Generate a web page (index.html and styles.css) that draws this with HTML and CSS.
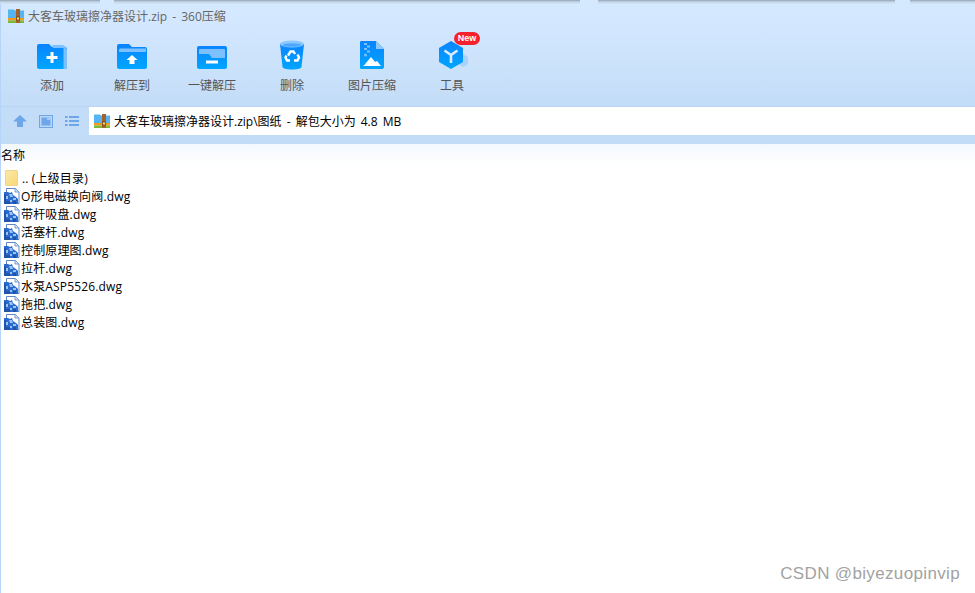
FILE: index.html
```html
<!DOCTYPE html>
<html lang="zh-CN">
<head>
    <meta charset="UTF-8">
    <title>大客车玻璃擦净器设计.zip - 360压缩</title>
    <link rel="stylesheet" href="styles.css">
</head>
<body>

<svg class="defs" width="0" height="0">
    <linearGradient id="blueFade" x1="0" y1="0" x2="0" y2="1">
        <stop offset="0" stop-color="#0a84ff"/>
        <stop offset="1" stop-color="#00a6ff"/>
    </linearGradient>
    <symbol id="zip" viewBox="0 0 16 16">
        <path d="M0 1.500h6l1 1h9v8H0z" fill="#55b5f2"/>
        <rect x="0" y="10" width="16" height="2.500" fill="#f29a1f"/>
        <rect x="0" y="12.500" width="16" height="2.500" fill="#7cb83a"/>
        <rect x="8" y="1" width="4" height="14" fill="#a5622a"/>
        <rect x="8.500" y="9" width="3" height="3" fill="#f6d26a" stroke="#6b3d12" stroke-width=".7"/>
    </symbol>
    <symbol id="dwg" viewBox="0 0 16 16">
        <path d="M2.500 .5h9l3.500 3.500v11.500H2.500z" fill="#fff" stroke="#5f86c6"/>
        <path d="M11 .5v3.500h4" fill="#d7e6f8" stroke="#5f86c6" stroke-width=".8"/>
        <path d="M0 4h4l2 1 2-1 1 3 3 2 2 2v5H0z" fill="#2a6bd0"/>
        <path d="M5 6h3l1 3H6zM9 10h3v2H9zM2 8h2v3H2zM6 12h2v2H6z" fill="#9cc2ef"/>
        <path d="M0 6h2v10H0zM2 13h4v3H2zM9 13h3v3H9z" fill="#2353a8"/>
    </symbol>
</svg>

<div class="window">
    <div class="shadow-strip">
        <span class="seg-a"></span>
        <span class="seg-b"></span>
        <span class="seg-c"></span>
        <span class="seg-d"></span>
    </div>

    <header class="titlebar">
        <svg class="zip-icon" width="16" height="16"><use href="#zip"/></svg>
        <span>大客车玻璃擦净器设计.zip - 360压缩</span>
    </header>

    <nav class="toolbar">
        <div class="tool">
            <svg width="32" height="30" viewBox="0 0 32 30">
                <path d="M3 4h10l3 3h13a2 2 0 0 1 2 2v18a2 2 0 0 1-2 2H3a2 2 0 0 1-2-2V6a2 2 0 0 1 2-2z" fill="url(#blueFade)"/>
                <path d="M16 5h11l3 2v2a2 2 0 0 0-2-1H17z" fill="#7cc0ff"/>
                <path d="M27.500 8h1.500a2 2 0 0 1 2 2v17a2 2 0 0 1-2 2h-1.500z" fill="#7cc0ff"/>
                <path d="M11.500 16h4v-4h3v4h4v3h-4v4h-3v-4h-4z" fill="#fff" transform="translate(-1 0)"/>
            </svg>
            <span>添加</span>
        </div>
        <div class="tool">
            <svg width="32" height="30" viewBox="0 0 32 30">
                <path d="M3 4h10l3 3h13a2 2 0 0 1 2 2v18a2 2 0 0 1-2 2H3a2 2 0 0 1-2-2V6a2 2 0 0 1 2-2z" fill="url(#blueFade)"/>
                <path d="M3 10a1.500 1.500 0 0 1 1.500-1.500H30V12H3z" fill="#7cc0ff"/>
                <path d="M16 15l5.500 5H18.500v4h-5v-4H10.500z" fill="#fff"/>
            </svg>
            <span>解压到</span>
        </div>
        <div class="tool">
            <svg width="32" height="30" viewBox="0 0 32 30">
                <rect x="1" y="6" width="30" height="23" rx="2" fill="url(#blueFade)"/>
                <path d="M4 9h24a1 1 0 0 1 1 1v8H16l-3-4H3v-4a1 1 0 0 1 1-1z" fill="#7cc0ff"/>
                <rect x="10" y="20.500" width="12" height="3" fill="#fff"/>
            </svg>
            <span>一键解压</span>
        </div>
        <div class="tool">
            <svg width="26" height="30" viewBox="0 0 26 30">
                <path d="M1 4l2.500 23c.2 1.500 4 2.500 9.500 2.500s9.300-1 9.500-2.500L25 4z" fill="url(#blueFade)"/>
                <ellipse cx="13" cy="4" rx="12" ry="3.500" fill="#8ac8ff"/>
                <ellipse cx="13" cy="5" rx="9" ry="1.800" fill="#4aa8ff"/>
                <g fill="none" stroke="#fff" stroke-width="2.400">
                    <path d="M9 15.500l2.500-4h3l1.500 2.500"/>
                    <path d="M18.500 14.500l1.500 3-1.500 3H15"/>
                    <path d="M11 20.500H8l-1.500-3 1-2"/>
                </g>
            </svg>
            <span>删除</span>
        </div>
        <div class="tool">
            <svg width="26" height="30" viewBox="0 0 26 30">
                <path d="M2 1h15l8 8v18a2 2 0 0 1-2 2H2a1.500 1.500 0 0 1-1-2V2.500A1.500 1.500 0 0 1 2 1z" fill="url(#blueFade)"/>
                <path d="M17 1l8 8h-8z" fill="#8fc8fb"/>
                <path d="M5 3h3v2H5zM8 5.500h3v2H8zM5 8h3v2H5zM8 10.500h3v2H8z" fill="#7cc0ff"/>
                <circle cx="6.500" cy="15" r="1.500" fill="#7cc0ff"/>
                <path d="M4 26q2-1 3-3l5-6 4 5 2-1 4 5z" fill="#fff"/>
            </svg>
            <span>图片压缩</span>
        </div>
        <div class="tool">
            <svg class="hex" width="30" height="30" viewBox="0 0 30 30">
                <path d="M24 14l5 3v7l-5 3-5-3v-7z" fill="#a7d3fb"/>
                <path d="M12 1l12 7v14l-12 7-12-7V8z" fill="url(#blueFade)"/>
                <path d="M5.500 10.500l6.500 4.500 6.500-4.500M12 15v8" fill="none" stroke="#d8ecff" stroke-width="2.600"/>
            </svg>
            <span>工具</span>
            <b class="badge">New</b>
        </div>
    </nav>

    <div class="addressbar">
        <div class="nav-icons">
            <svg width="14" height="12" viewBox="0 0 14 12"><path d="M7 0l7 6.500H10V12H4V6.500H0z" fill="#6ea6ea"/></svg>
            <svg width="14" height="13" viewBox="0 0 14 13"><rect x=".5" y=".5" width="13" height="12" fill="#bcd7f5" stroke="#6ea6ea"/><rect x="2.500" y="2.500" width="9" height="8" fill="#6ea6ea"/><rect x="8" y="2.500" width="3.500" height="2.500" fill="#a9ccf3"/></svg>
            <svg width="14" height="10" viewBox="0 0 14 10"><path d="M0 0h2.500v2H0zM4 0h10v2H4zM0 4h2.500v2H0zM4 4h10v2H4zM0 8h2.500v2H0zM4 8h10v2H4z" fill="#6ea6ea"/></svg>
        </div>
        <div class="path">
            <svg class="zip-icon" width="16" height="16"><use href="#zip"/></svg>
            <span>大客车玻璃擦净器设计.zip\图纸 - 解包大小为 4.8 MB</span>
        </div>
    </div>
    <div class="band"></div>

    <section class="files">
        <div class="files-head">名称</div>
        <ul class="file-list">
            <li><i class="folder"></i>.. (上级目录)</li>
            <li><svg width="16" height="16"><use href="#dwg"/></svg>O形电磁换向阀.dwg</li>
            <li><svg width="16" height="16"><use href="#dwg"/></svg>带杆吸盘.dwg</li>
            <li><svg width="16" height="16"><use href="#dwg"/></svg>活塞杆.dwg</li>
            <li><svg width="16" height="16"><use href="#dwg"/></svg>控制原理图.dwg</li>
            <li><svg width="16" height="16"><use href="#dwg"/></svg>拉杆.dwg</li>
            <li><svg width="16" height="16"><use href="#dwg"/></svg>水泵ASP5526.dwg</li>
            <li><svg width="16" height="16"><use href="#dwg"/></svg>拖把.dwg</li>
            <li><svg width="16" height="16"><use href="#dwg"/></svg>总装图.dwg</li>
        </ul>
    </section>

    <div class="watermark">CSDN @biyezuopinvip</div>
</div>

</body>
</html>
```

FILE: styles.css
```css
* {
    box-sizing: border-box;
}
html, body {
    margin: 0;
    height: 100%;
    overflow: hidden;
}
body {
    font-family: "Open Sans", "Noto Sans CJK SC", sans-serif;
    font-size: 12px;
    color: #000;
    background: #fff;
}
.defs {
    position: absolute;
}
.window {
    height: 100%;
    display: flex;
    flex-direction: column;
    position: relative;
    border-left: 1px solid #b5d4f7;
}

/* title and toolbar share one gradient */
.shadow-strip {
    height: 4px;
    display: flex;
    background: #d4e8fe;
    margin-left: -1px;
}
.shadow-strip span {
    background: linear-gradient(#93a0ae, #bccfe2 40%, #d4e8fe);
}
.seg-a { width: 100px; }
.seg-b { width: 466px; margin-left: 14px; }
.seg-c { width: 297px; margin-left: 18px; }
.seg-d { flex: 1; margin-left: 15px; }

.titlebar {
    height: 26px;
    display: flex;
    align-items: center;
    gap: 4px;
    padding: 0 0 2px 7px;
    font-size: 12px;
    word-spacing: 2px;
    color: #666;
    background: linear-gradient(#d4e8fe, #d2e7fe);
}
.toolbar {
    height: 77px;
    display: flex;
    padding-left: 11px;
    background: linear-gradient(#d2e7fe, #c3dcf7);
    border-bottom: 1px solid #b9d5f3;
}
.tool {
    width: 80px;
    position: relative;
    display: flex;
    flex-direction: column;
    align-items: center;
    color: #555;
    padding-top: 10px;
}
.tool svg {
    height: 30px;
    margin-bottom: 6px;
}
.tool .hex {
    margin-left: 3px;
}
.badge {
    position: absolute;
    left: 42px;
    top: 2px;
    width: 26px;
    height: 13px;
    border-radius: 7px;
    background: #f5222d;
    color: #fff;
    font: bold 9px/13px "Liberation Sans", sans-serif;
    text-align: center;
}

.addressbar {
    height: 28px;
    display: flex;
    background: #c3dcf7;
}
.nav-icons {
    width: 88px;
    display: flex;
    align-items: center;
    gap: 12px;
    padding-left: 12px;
}
.path {
    flex: 1;
    display: flex;
    align-items: center;
    gap: 4px;
    padding-left: 5px;
    word-spacing: 2px;
    background: #fff;
}
.band {
    height: 9px;
    background: #c2dcf8;
}

.files {
    flex: 1;
}
.files-head {
    height: 21px;
    line-height: 23px;
    background: linear-gradient(#f3f8fe, #fff);
}
.file-list {
    list-style: none;
    margin: 4px 0 0;
    padding: 0 0 0 3px;
    letter-spacing: .15px;
}
.file-list li {
    height: 18px;
    display: flex;
    align-items: center;
    gap: 1px;
    white-space: nowrap;
}
.folder {
    width: 13px;
    height: 16px;
    margin: 0 3px 0 1px;
    background: linear-gradient(135deg, #fbe9a6, #f8d878);
    border: 1px solid #ecd58d;
    border-radius: 1px;
}
.watermark {
    position: absolute;
    right: 15px;
    bottom: 9px;
    font: 17px "Liberation Sans", sans-serif;
    letter-spacing: .35px;
    color: #a2a2a2;
}
```
